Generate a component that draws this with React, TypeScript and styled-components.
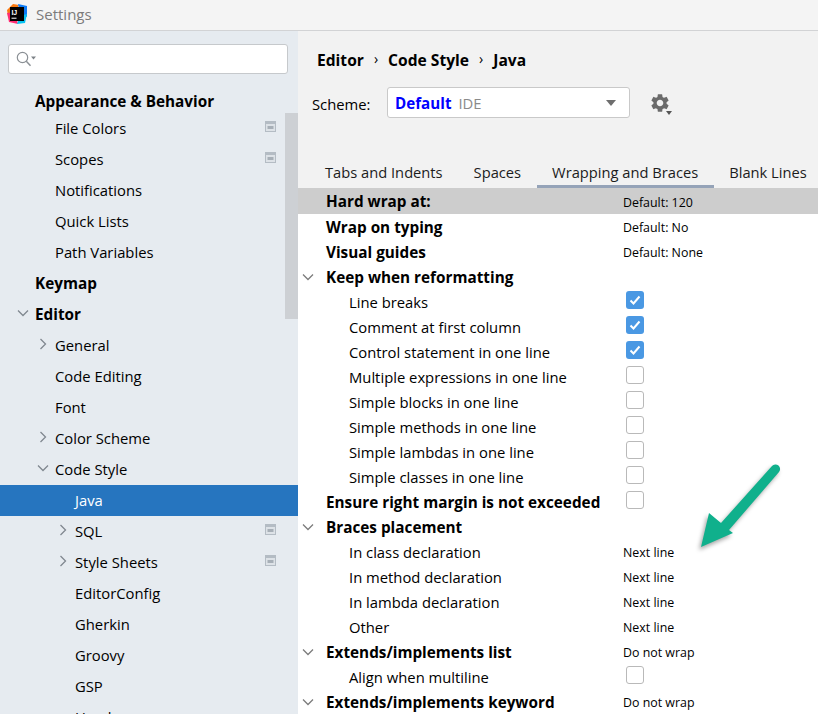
import styled, { createGlobalStyle } from "styled-components";
import { MdSettings } from "react-icons/md";

const GlobalStyle = createGlobalStyle`
  html, body {
    margin: 0;
    padding: 0;
    background: #f2f2f2;
  }
  * {
    box-sizing: border-box;
  }
`;

interface TreeItem {
  label: string;
  level: number;
  bold?: boolean;
  arrow?: "right" | "down";
  badge?: boolean;
  selected?: boolean;
  first?: boolean;
}

const treeItems: TreeItem[] = [
  { label: "Appearance & Behavior", level: 0, bold: true, first: true },
  { label: "File Colors", level: 1, badge: true },
  { label: "Scopes", level: 1, badge: true },
  { label: "Notifications", level: 1 },
  { label: "Quick Lists", level: 1 },
  { label: "Path Variables", level: 1 },
  { label: "Keymap", level: 0, bold: true },
  { label: "Editor", level: 0, bold: true, arrow: "down" },
  { label: "General", level: 1, arrow: "right" },
  { label: "Code Editing", level: 1 },
  { label: "Font", level: 1 },
  { label: "Color Scheme", level: 1, arrow: "right" },
  { label: "Code Style", level: 1, arrow: "down" },
  { label: "Java", level: 2, selected: true },
  { label: "SQL", level: 2, arrow: "right", badge: true },
  { label: "Style Sheets", level: 2, arrow: "right", badge: true },
  { label: "EditorConfig", level: 2 },
  { label: "Gherkin", level: 2 },
  { label: "Groovy", level: 2 },
  { label: "GSP", level: 2 },
  { label: "Haml", level: 2 },
];

interface OptionRow {
  label: string;
  child?: boolean;
  bold?: boolean;
  expander?: boolean;
  value?: string;
  checked?: boolean;
  highlighted?: boolean;
}

const optionRows: OptionRow[] = [
  { label: "Hard wrap at:", bold: true, value: "Default: 120", highlighted: true },
  { label: "Wrap on typing", bold: true, value: "Default: No" },
  { label: "Visual guides", bold: true, value: "Default: None" },
  { label: "Keep when reformatting", bold: true, expander: true },
  { label: "Line breaks", child: true, checked: true },
  { label: "Comment at first column", child: true, checked: true },
  { label: "Control statement in one line", child: true, checked: true },
  { label: "Multiple expressions in one line", child: true, checked: false },
  { label: "Simple blocks in one line", child: true, checked: false },
  { label: "Simple methods in one line", child: true, checked: false },
  { label: "Simple lambdas in one line", child: true, checked: false },
  { label: "Simple classes in one line", child: true, checked: false },
  { label: "Ensure right margin is not exceeded", bold: true, checked: false },
  { label: "Braces placement", bold: true, expander: true },
  { label: "In class declaration", child: true, value: "Next line" },
  { label: "In method declaration", child: true, value: "Next line" },
  { label: "In lambda declaration", child: true, value: "Next line" },
  { label: "Other", child: true, value: "Next line" },
  { label: "Extends/implements list", bold: true, expander: true, value: "Do not wrap" },
  { label: "Align when multiline", child: true, checked: false },
  { label: "Extends/implements keyword", bold: true, expander: true, value: "Do not wrap" },
];

const tabs = ["Tabs and Indents", "Spaces", "Wrapping and Braces", "Blank Lines"];

const Chevron = ({ down, color = "#808890" }: { down?: boolean; color?: string }) => (
  <svg width="12" height="12" viewBox="0 0 12 12" fill="none">
    <path
      d={down ? "M1 3.5 L6 8.5 L11 3.5" : "M3.5 1 L8.5 6 L3.5 11"}
      stroke={color}
      strokeWidth="1.3"
    />
  </svg>
);

const Logo = () => (
  <svg width="20" height="20" viewBox="0 0 20 20">
    <path d="M0 6 L6 0 L12 1 L8 10 L1 12 Z" fill="#f97a12" />
    <path d="M11 0 L20 2 L20 13 L13 9 Z" fill="#0d7bf7" />
    <path d="M0 9 L2 18 L11 20 L8 8 Z" fill="#fe2e72" />
    <path d="M13 12 L20 10 L18 19 L10 20 Z" fill="#07c3f2" />
    <rect x="3" y="3" width="14" height="14" fill="#000" />
    <text x="4.4" y="10.5" fontFamily="'Liberation Sans', sans-serif" fontSize="7" fontWeight="700" fill="#fff">
      IJ
    </text>
    <rect x="4.5" y="13.7" width="5" height="1" fill="#fff" />
  </svg>
);

const SearchIcon = () => (
  <svg width="21" height="16" viewBox="0 0 21 16" fill="none">
    <circle cx="6.5" cy="6.5" r="5.2" stroke="#8b9095" strokeWidth="1.2" />
    <path d="M10.3 10.3 L14.5 14.7" stroke="#8b9095" strokeWidth="1.5" />
    <path d="M15 5.5 H20 L17.5 8.5 Z" fill="#7d8287" />
  </svg>
);

const BadgeIcon = () => (
  <svg width="11" height="11" viewBox="0 0 11 11">
    <rect width="11" height="11" fill="#b4bcc4" />
    <rect x="1" y="3" width="9" height="7" fill="#dde2e7" />
    <rect x="2.5" y="5" width="6" height="3" fill="#a7afb7" />
  </svg>
);

const Arrow = () => (
  <ArrowSvg width="100" height="110" viewBox="0 0 100 110">
    <path
      d="M6 96 L14 62 L26 72 L77 15 A4.5 4.5 0 0 1 84 21 L34 79 L38 82 Z"
      fill="#10b08c"
    />
  </ArrowSvg>
);

const App = () => {
  return (
    <Window>
      <GlobalStyle />
      <TitleBar>
        <Logo />
        <TitleText>Settings</TitleText>
      </TitleBar>
      <Body>
        <Sidebar>
          <SearchBox>
            <SearchIcon />
          </SearchBox>
          <Tree>
            {treeItems.map((item) => (
              <TreeRow key={item.label} $level={item.level} $selected={item.selected} $first={item.first}>
                <TreeArrow>{item.arrow && <Chevron down={item.arrow === "down"} />}</TreeArrow>
                <TreeLabel $bold={item.bold}>{item.label}</TreeLabel>
                {item.badge && (
                  <TreeBadge>
                    <BadgeIcon />
                  </TreeBadge>
                )}
              </TreeRow>
            ))}
          </Tree>
          <ScrollThumb />
        </Sidebar>
        <Content>
          <Breadcrumb>
            <span>Editor</span>
            <Crumb>›</Crumb>
            <span>Code Style</span>
            <Crumb>›</Crumb>
            <span>Java</span>
          </Breadcrumb>
          <SchemeRow>
            <SchemeLabel>Scheme:</SchemeLabel>
            <Combo>
              <ComboName>Default</ComboName>
              <ComboHint>IDE</ComboHint>
              <ComboArrow />
            </Combo>
            <GearButton>
              <MdSettings size={22} color="#6b6b6b" />
              <GearCaret />
            </GearButton>
          </SchemeRow>
          <TabBar>
            {tabs.map((tab) => (
              <Tab key={tab} $active={tab === "Wrapping and Braces"}>
                {tab}
              </Tab>
            ))}
          </TabBar>
          <Options>
            {optionRows.map((row) => (
              <Row key={row.label} $highlighted={row.highlighted}>
                <Expander>{row.expander && <Chevron down color="#7c7c7c" />}</Expander>
                <RowLabel $bold={row.bold} $child={row.child}>
                  {row.label}
                </RowLabel>
                {row.value && <RowValue>{row.value}</RowValue>}
                {row.checked !== undefined && (
                  <Checkbox $checked={row.checked}>
                    {row.checked && (
                      <svg width="12" height="12" viewBox="0 0 12 12" fill="none">
                        <path d="M1.5 6.5 L4.5 9.5 L10.5 2.5" stroke="#fff" strokeWidth="2" />
                      </svg>
                    )}
                  </Checkbox>
                )}
              </Row>
            ))}
          </Options>
          <Arrow />
        </Content>
      </Body>
    </Window>
  );
};

const Window = styled.div`
  width: 818px;
  height: 714px;
  overflow: hidden;
  display: flex;
  flex-direction: column;
  font-family: "Open Sans", "Noto Sans", sans-serif;
  color: #000;
`;

const TitleBar = styled.div`
  height: 31px;
  flex: none;
  display: flex;
  align-items: center;
  gap: 9px;
  padding: 0 0 2px 7px;
  background: #f4f4f4;
  border-bottom: 1px solid #d2d3d5;
`;

const TitleText = styled.span`
  font-size: 15px;
  color: #7b7b7b;
`;

const Body = styled.div`
  flex: 1;
  display: flex;
  min-height: 0;
`;

const Sidebar = styled.div`
  position: relative;
  width: 298px;
  flex: none;
  padding-top: 13px;
  background: #e6ebf0;
  overflow: hidden;
`;

const SearchBox = styled.div`
  height: 30px;
  margin: 0 10px 12px 8px;
  padding-left: 7px;
  display: flex;
  align-items: center;
  background: #fff;
  border: 1px solid #c6c9cc;
  border-radius: 3px;
`;

const Tree = styled.div`
  display: flex;
  flex-direction: column;
`;

const TreeRow = styled.div<{ $level: number; $selected?: boolean; $first?: boolean }>`
  height: ${({ $first }) => ($first ? "27px" : "31px")};
  flex: none;
  display: flex;
  align-items: center;
  padding-top: ${({ $first }) => ($first ? "5px" : "0")};
  padding-left: ${({ $level }) => 15 + $level * 20}px;
  background: ${({ $selected }) => ($selected ? "#2675bf" : "transparent")};
  color: ${({ $selected }) => ($selected ? "#fff" : "#000")};
`;

const TreeArrow = styled.span`
  width: 20px;
  flex: none;
  display: flex;
  margin-top: -3px;
  padding-left: 2px;
`;

const TreeLabel = styled.span<{ $bold?: boolean }>`
  flex: 1;
  margin-top: -2px;
  font-size: ${({ $bold }) => ($bold ? "15.3px" : "14.8px")};
  font-weight: ${({ $bold }) => ($bold ? 700 : 400)};
  white-space: nowrap;
`;

const TreeBadge = styled.span`
  display: flex;
  margin: -4px 22px 0 0;
`;

const ScrollThumb = styled.div`
  position: absolute;
  top: 82px;
  right: 0;
  width: 13px;
  height: 206px;
  background: #cdd0d4;
`;

const Content = styled.div`
  position: relative;
  flex: 1;
  min-width: 0;
  display: flex;
  flex-direction: column;
`;

const Breadcrumb = styled.div`
  display: flex;
  align-items: center;
  gap: 10px;
  height: 24px;
  margin: 17px 0 15px 19px;
  font-size: 15.6px;
  font-weight: 700;
`;

const Crumb = styled.span`
  font-weight: 400;
  font-size: 14px;
  margin-top: -4px;
`;

const SchemeRow = styled.div`
  display: flex;
  align-items: center;
  height: 31px;
  padding-left: 14px;
`;

const SchemeLabel = styled.span`
  width: 75px;
  padding-top: 2px;
  font-size: 14.8px;
`;

const Combo = styled.div`
  width: 243px;
  height: 31px;
  display: flex;
  align-items: center;
  gap: 7px;
  padding: 0 13px 0 7px;
  background: #fff;
  border: 1px solid #c9c9c9;
  border-radius: 3px;
`;

const ComboName = styled.span`
  font-size: 15.2px;
  font-weight: 700;
  color: #0000ff;
`;

const ComboHint = styled.span`
  flex: 1;
  font-size: 14.8px;
  color: #8a8a8a;
`;

const ComboArrow = styled.span`
  width: 0;
  height: 0;
  border-left: 5.5px solid transparent;
  border-right: 5.5px solid transparent;
  border-top: 6px solid #6e6e6e;
`;

const GearButton = styled.div`
  position: relative;
  display: flex;
  margin-left: 19px;
`;

const GearCaret = styled.span`
  position: absolute;
  right: -1px;
  bottom: -1px;
  width: 0;
  height: 0;
  border-left: 3.5px solid transparent;
  border-right: 3.5px solid transparent;
  border-top: 4px solid #555;
`;

const TabBar = styled.div`
  display: flex;
  height: 32px;
  margin-top: 38px;
  padding-left: 11.5px;
  flex: none;
`;

const Tab = styled.div<{ $active?: boolean }>`
  padding: 6px 15.5px 0;
  font-size: 14.7px;
  white-space: nowrap;
  color: #1c1c1c;
  border-bottom: 3px solid ${({ $active }) => ($active ? "#95a3b8" : "transparent")};
`;

const Options = styled.div`
  flex: 1;
  display: flex;
  flex-direction: column;
  background: #fff;
  overflow: hidden;
`;

const Row = styled.div<{ $highlighted?: boolean }>`
  flex: none;
  height: ${({ $highlighted }) => ($highlighted ? "26px" : "25px")};
  display: grid;
  grid-template-columns: 28px 297px 1fr;
  align-items: center;
  background: ${({ $highlighted }) => ($highlighted ? "#cdcdcd" : "transparent")};
`;

const Expander = styled.span`
  display: flex;
  padding-left: 4px;
`;

const RowLabel = styled.span<{ $bold?: boolean; $child?: boolean }>`
  padding-left: ${({ $child }) => ($child ? "23px" : "0")};
  font-size: ${({ $bold }) => ($bold ? "15.3px" : "14.8px")};
  font-weight: ${({ $bold }) => ($bold ? 700 : 400)};
  white-space: nowrap;
`;

const RowValue = styled.span`
  padding-top: 2px;
  font-size: 12.4px;
  white-space: nowrap;
`;

const Checkbox = styled.span<{ $checked: boolean }>`
  width: 18px;
  height: 18px;
  margin: -3px 0 0 3px;
  display: flex;
  align-items: center;
  justify-content: center;
  border-radius: 3px;
  background: ${({ $checked }) => ($checked ? "#4a98e3" : "#fff")};
  border: ${({ $checked }) => ($checked ? "none" : "1.5px solid #b9b9b9")};
`;

const ArrowSvg = styled.svg`
  position: absolute;
  left: 397px;
  top: 420px;
  filter: drop-shadow(-2px 3px 2px rgba(0, 0, 0, 0.35));
`;

export default App;
